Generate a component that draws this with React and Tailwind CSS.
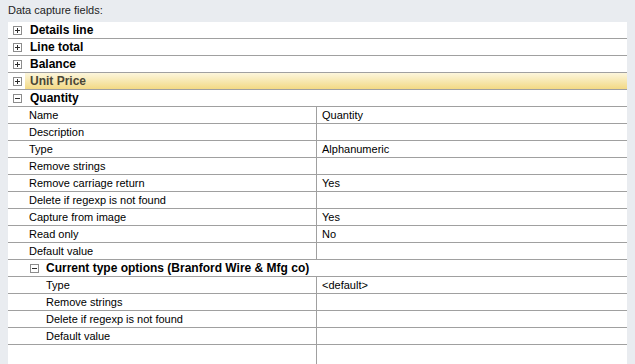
import React from 'react';

const props = [
  ['Name', 'Quantity'],
  ['Description', ''],
  ['Type', 'Alphanumeric'],
  ['Remove strings', ''],
  ['Remove carriage return', 'Yes'],
  ['Delete if regexp is not found', ''],
  ['Capture from image', 'Yes'],
  ['Read only', 'No'],
  ['Default value', ''],
];

const typeProps = [
  ['Type', '<default>'],
  ['Remove strings', ''],
  ['Delete if regexp is not found', ''],
  ['Default value', ''],
];

function Toggle({ open }) {
  return (
    <span className="relative block w-[9px] h-[9px] border border-[#8c8c8c] bg-white">
      <span className="absolute left-[1px] top-[3px] w-[5px] h-px bg-[#2d2d2d]" />
      {!open && <span className="absolute left-[3px] top-[1px] w-px h-[5px] bg-[#2d2d2d]" />}
    </span>
  );
}

function Category({ label, open, selected }) {
  return (
    <div className="flex h-[17px] border-b border-[#a0a0a0]">
      <div className="w-[17px] shrink-0 flex items-center justify-center pl-[1px] bg-white">
        <Toggle open={open} />
      </div>
      <div
        className={
          'flex-1 flex items-center pl-[5px] font-bold text-[12px] ' +
          (selected ? 'bg-gradient-to-b from-[#fcf6dc] to-[#f3d983] text-[#4a4636]' : 'text-black')
        }
      >
        {label}
      </div>
    </div>
  );
}

function PropRow({ name, value, nested }) {
  return (
    <div className="flex h-[17px] border-b border-[#a0a0a0]">
      <div className={'shrink-0 flex items-center border-r border-[#a0a0a0] ' + (nested ? 'w-[309px] pl-[38px]' : 'w-[309px] pl-[21px]')}>
        {name}
      </div>
      <div className="flex-1 flex items-center pl-[5px]">{value}</div>
    </div>
  );
}

export default function App() {
  return (
    <div className="w-[635px] h-[364px] bg-[#e9ecf0] overflow-hidden text-[11px] text-black" style={{ fontFamily: '"Liberation Sans", Arial, sans-serif' }}>
      <div className="h-[22px] pl-[8px] pt-[2px] text-[#1e1e1e]">Data capture fields:</div>
      <div className="ml-[8px] w-[619px] h-[342px] bg-white flex flex-col">
        <Category label="Details line" />
        <Category label="Line total" />
        <Category label="Balance" />
        <Category label="Unit Price" selected />
        <Category label="Quantity" open />
        {props.map(([n, v]) => (
          <PropRow key={n} name={n} value={v} />
        ))}
        <div className="flex h-[17px] border-b border-[#a0a0a0]">
          <div className="w-[17px] shrink-0" />
          <div className="w-[17px] shrink-0 flex items-center justify-center pl-[1px]">
            <Toggle open />
          </div>
          <div className="flex-1 flex items-center pl-[4px] font-bold text-[12px]">
            Current type options (Branford Wire &amp; Mfg co)
          </div>
        </div>
        {typeProps.map(([n, v]) => (
          <PropRow key={'t' + n} name={n} value={v} nested />
        ))}
        <div className="flex flex-1">
          <div className="w-[309px] border-r border-[#a0a0a0]" />
        </div>
      </div>
    </div>
  );
}
